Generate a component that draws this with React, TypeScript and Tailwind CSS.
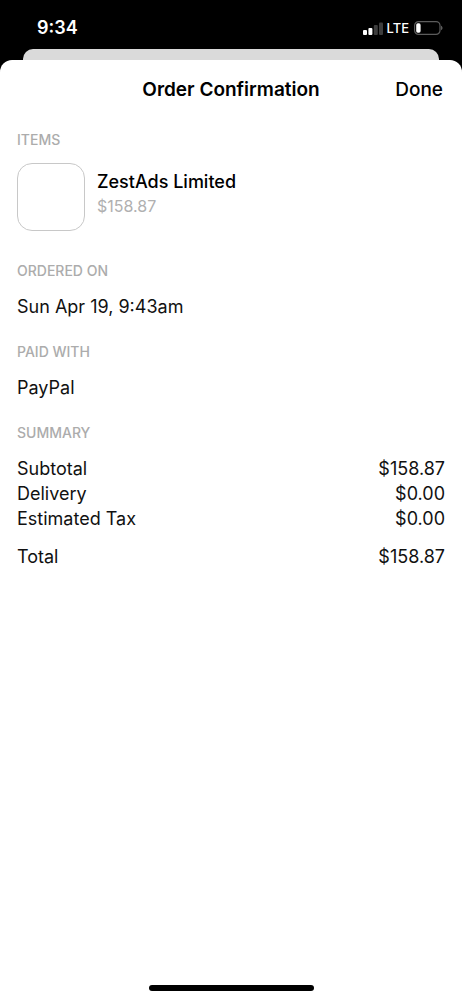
import React from 'react';

const summaryRows = [
  { label: 'Subtotal', value: '$158.87' },
  { label: 'Delivery', value: '$0.00' },
  { label: 'Estimated Tax', value: '$0.00' },
];

function StatusBar() {
  return (
    <div className="flex h-[49px] items-center justify-between pt-[7px] pr-[19px] pl-[37px] text-white">
      <span className="text-[18px] leading-6 font-semibold">9:34</span>
      <div className="flex items-center gap-1">
        <svg width="20" height="13" viewBox="0 0 20 13" aria-hidden="true">
          <rect x="0" y="8" width="4" height="5" rx="1" fill="#fff" />
          <rect x="5.4" y="6" width="4" height="7" rx="1" fill="#fff" />
          <rect x="10.8" y="3" width="4" height="10" rx="1" fill="#3d3d3d" />
          <rect x="16" y="0.5" width="4" height="12.5" rx="1" fill="#3d3d3d" />
        </svg>
        <span className="text-[13px] leading-6 font-medium">LTE</span>
        <svg width="30" height="14" viewBox="0 0 30 14" aria-hidden="true">
          <rect x="1.6" y="0.6" width="25.4" height="12.8" rx="4" fill="none" stroke="#5c5c5c" strokeWidth="1.2" />
          <rect x="3.2" y="2.3" width="4.4" height="9.4" rx="1.6" fill="#fff" />
          <path d="M28 4.8c1 .4 1.5 1.2 1.5 2.2s-.5 1.8-1.5 2.2z" fill="#5c5c5c" />
        </svg>
      </div>
    </div>
  );
}

function Label({ children }: { children: React.ReactNode }) {
  return <h2 className="mb-[13px] text-[14px] leading-5 font-medium text-[#acacac]">{children}</h2>;
}

export default function App() {
  return (
    <div className="flex min-h-screen flex-col bg-black font-['Inter',sans-serif] text-[#111]">
      <StatusBar />

      {/* card peeking out behind the sheet */}
      <div className="mx-[23px] h-[11px] rounded-t-[10px] bg-[#dadada]" />

      <div className="flex grow flex-col rounded-t-[12px] bg-white">
        <header className="grid h-[60px] grid-cols-[1fr_auto_1fr] items-center px-[19px] text-[19px] leading-6 text-black">
          <h1 className="col-start-2 font-semibold">Order Confirmation</h1>
          <button type="button" className="justify-self-end font-medium">Done</button>
        </header>

        <main className="grow px-[17px] pt-[10px] text-[18px] leading-[25px]">
          <section className="mb-[30px]">
            <Label>ITEMS</Label>
            <div className="flex gap-3">
              <div className="size-[68px] rounded-[15px] border border-[#c8c8c8]" />
              <div className="pt-[6px]">
                <p className="font-medium text-black">ZestAds Limited</p>
                <p className="text-[16px] text-[#b0b0b0]">$158.87</p>
              </div>
            </div>
          </section>

          <section className="mb-[23px]">
            <Label>ORDERED ON</Label>
            <p>Sun Apr 19, 9:43am</p>
          </section>

          <section className="mb-[23px]">
            <Label>PAID WITH</Label>
            <p>PayPal</p>
          </section>

          <section>
            <Label>SUMMARY</Label>
            <dl>
              {summaryRows.map((row) => (
                <div key={row.label} className="flex justify-between">
                  <dt>{row.label}</dt>
                  <dd>{row.value}</dd>
                </div>
              ))}
              <div className="mt-[13px] flex justify-between">
                <dt>Total</dt>
                <dd>$158.87</dd>
              </div>
            </dl>
          </section>
        </main>

        <div className="mx-auto mb-[9px] h-[6px] w-[165px] rounded-full bg-black" />
      </div>
    </div>
  );
}
